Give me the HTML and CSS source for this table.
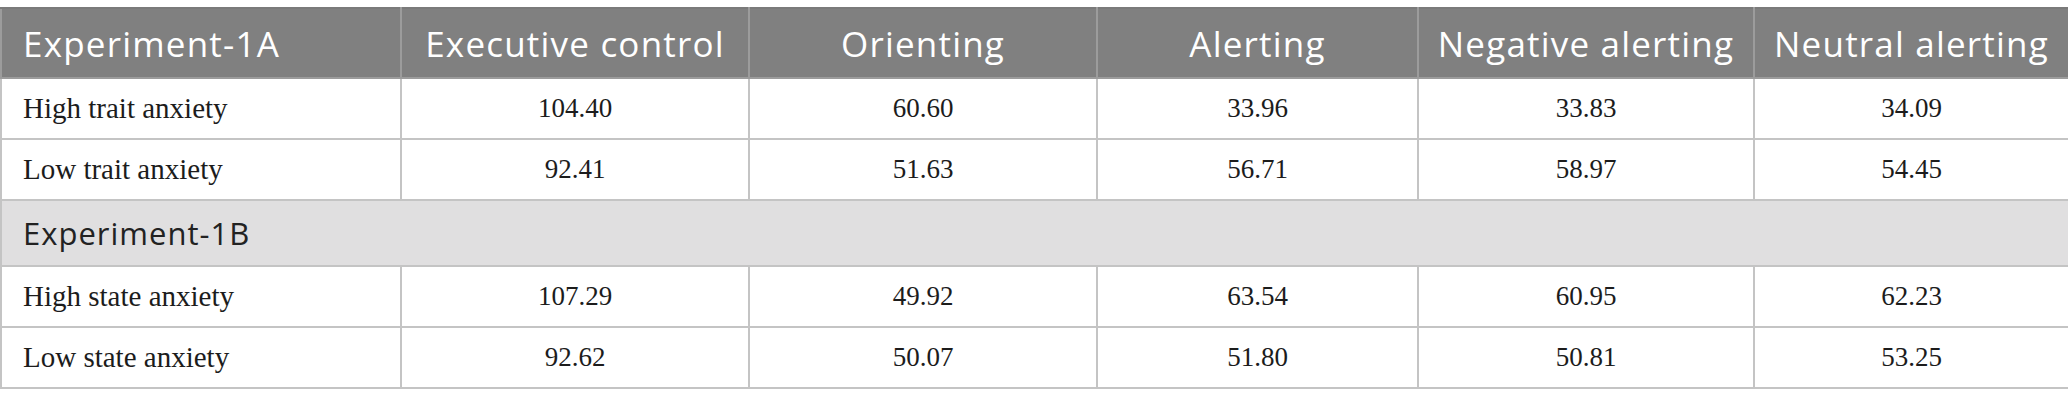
FILE: index.html
```html
<!DOCTYPE html>
<html>
<head>
<meta charset="utf-8">
<link rel="stylesheet" href="styles.css">
</head>
<body>
<table class="data">
  <colgroup>
    <col class="c1"><col class="c2"><col class="c3"><col class="c4"><col class="c5"><col class="c6">
  </colgroup>
  <thead>
    <tr class="head">
      <th class="lab">Experiment-1A</th>
      <th>Executive control</th>
      <th>Orienting</th>
      <th>Alerting</th>
      <th>Negative alerting</th>
      <th>Neutral alerting</th>
    </tr>
  </thead>
  <tbody>
    <tr class="row">
      <td class="lab">High trait anxiety</td><td>104.40</td><td>60.60</td><td>33.96</td><td>33.83</td><td>34.09</td>
    </tr>
    <tr class="row">
      <td class="lab">Low trait anxiety</td><td>92.41</td><td>51.63</td><td>56.71</td><td>58.97</td><td>54.45</td>
    </tr>
    <tr class="section">
      <td class="lab" colspan="6">Experiment-1B</td>
    </tr>
    <tr class="row">
      <td class="lab">High state anxiety</td><td>107.29</td><td>49.92</td><td>63.54</td><td>60.95</td><td>62.23</td>
    </tr>
    <tr class="row">
      <td class="lab">Low state anxiety</td><td>92.62</td><td>50.07</td><td>51.80</td><td>50.81</td><td>53.25</td>
    </tr>
  </tbody>
</table>
</body>
</html>
```

FILE: styles.css
```css
html, body {
  margin: 0;
  padding: 0;
  background: #ffffff;
}
body {
  padding-top: 7px;
}
.data {
  border-collapse: collapse;
  table-layout: fixed;
  width: 2068px;
}
.c1 { width: 400px; }
.c2 { width: 348px; }
.c3 { width: 348px; }
.c4 { width: 321px; }
.c5 { width: 336px; }
.c6 { width: 315px; }

.data th, .data td {
  border: 2px solid #c4c4c4;
  padding: 0;
  text-align: center;
}
.head th {
  background: #808080;
  color: #ffffff;
  font-family: "Open Sans", "Noto Sans", sans-serif;
  font-weight: 400;
  font-size: 35px;
  letter-spacing: 1.2px;
  height: 68px;
  border-color: #9c9c9c;
  border-top-color: #7a7a7a;
}
.row td {
  font-family: "Liberation Serif", "Times New Roman", serif;
  font-size: 27px;
  color: #1c1c1c;
  height: 59px;
}
.row td.lab {
  font-size: 29px;
}
.section td {
  background: #e0dfe0;
  font-family: "Open Sans", "Noto Sans", sans-serif;
  font-size: 31px;
  letter-spacing: 1px;
  color: #222222;
  height: 64px;
}
.data .lab {
  text-align: left;
  padding-left: 21px;
}
```
